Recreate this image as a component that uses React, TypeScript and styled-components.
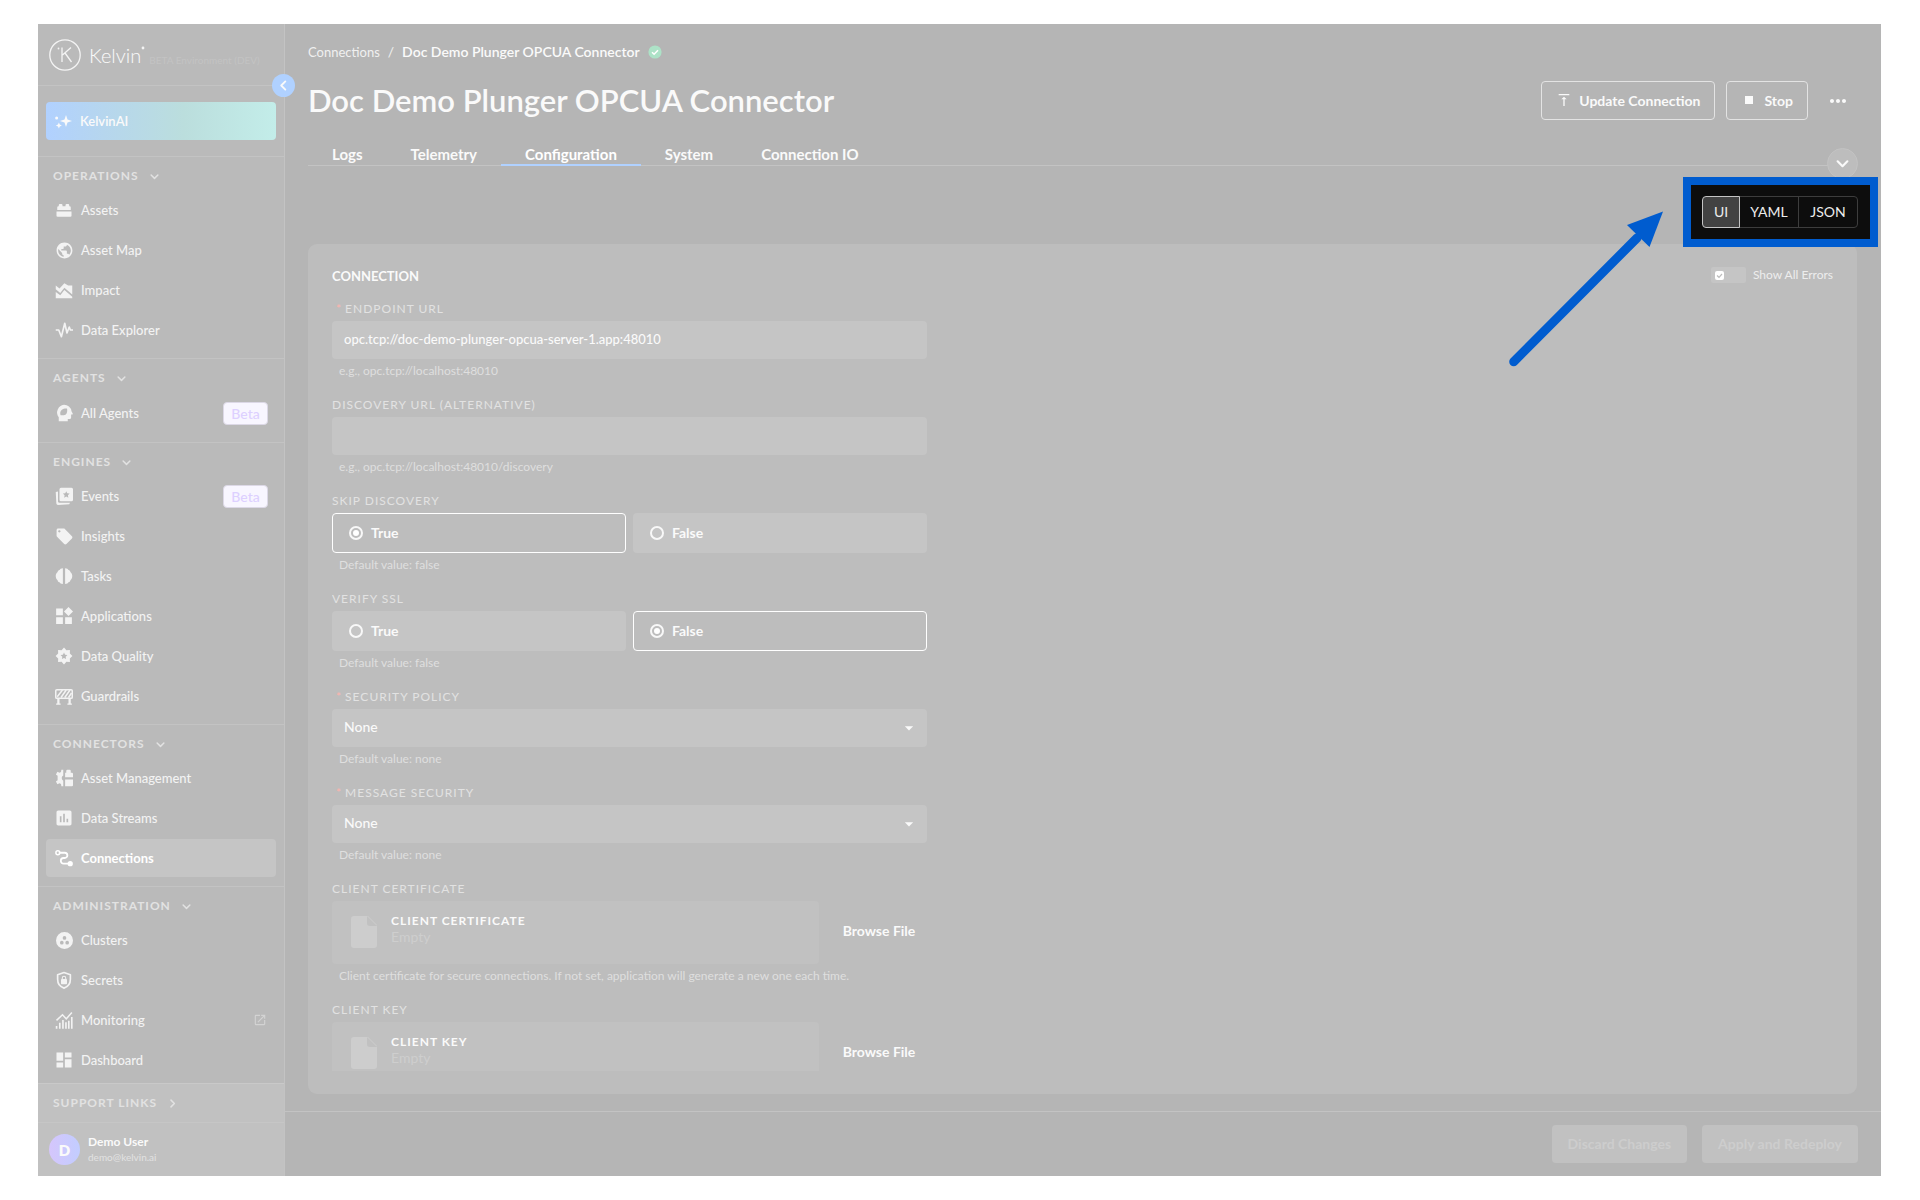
import React, { useState } from "react";
import styled, { createGlobalStyle, css } from "styled-components";
import {
  MdPublic,
  MdLocalOffer,
  MdAssessment,
  MdDashboard,
  MdOpenInNew,
  MdVerticalAlignTop,
  MdStop,
  MdMoreHoriz,
  MdArrowDropDown,
} from "react-icons/md";

const color = {
  page: "#b5b5b5",
  sidebar: "#bababa",
  card: "#bdbdbd",
  line: "#c3c3c3",
  field: "#c5c5c5",
  panel: "#c1c1c1",
  text: "#fafafa",
  nav: "#f3f3f3",
  muted: "#e2e2e2",
  help: "#dfdfdf",
  faint: "#cdcdcd",
  blue: "#b0d1ff",
  mark: "#005ccf",
};

const GlobalStyle = createGlobalStyle`
  *, *::before, *::after { box-sizing: border-box; }
  body {
    margin: 0;
    background: #fff;
    color: ${color.text};
    font-family: Lato, "Open Sans", sans-serif;
    font-size: 14px;
  }
  button, input, select { font: inherit; color: inherit; }
  button { cursor: pointer; }
  a { color: inherit; text-decoration: none; }
`;

/* ---------- frame ---------- */

const Page = styled.div`
  height: 100vh;
  padding: 24px 39px 24px 38px;
`;

const Frame = styled.div`
  display: flex;
  height: 100%;
  background: ${color.page};
`;

/* ---------- sidebar ---------- */

const Sidebar = styled.aside`
  position: relative;
  flex: none;
  display: flex;
  flex-direction: column;
  width: 247px;
  background: ${color.sidebar};
  border-right: 1px solid ${color.line};
`;

const Brand = styled.div`
  flex: none;
  display: flex;
  align-items: center;
  height: 62px;
  padding: 0 11px;
  border-bottom: 1px solid ${color.line};
`;

const BrandName = styled.span`
  display: flex;
  margin: 0 4px 0 8px;
  font-size: 20px;
  line-height: 28px;
  font-weight: 300;
  white-space: nowrap;
`;

const BrandEnv = styled.span`
  padding-top: 10px;
  font-size: 10px;
  line-height: 12px;
  white-space: nowrap;
  color: #c3c3c3;
`;

const CollapseButton = styled.button`
  position: absolute;
  top: 50px;
  right: -11px;
  z-index: 2;
  display: grid;
  place-items: center;
  width: 23px;
  height: 23px;
  padding: 0;
  border: 0;
  border-radius: 50%;
  background: ${color.blue};
`;

const AssistantArea = styled.div`
  flex: none;
  padding: 16px 8px;
`;

const AssistantButton = styled.button`
  display: flex;
  align-items: center;
  gap: 8px;
  width: 100%;
  height: 38px;
  padding: 0 8px 1px;
  border: 0;
  border-radius: 4px;
  background: linear-gradient(90deg, #b1d1ff 0%, #b6d6ee 25%, #bbdedd 60%, #c3ede9 100%);
  font-size: 13px;
  font-weight: 600;
`;

const Nav = styled.nav`
  flex: 1;
  min-height: 0;
  overflow: hidden;
`;

const Section = styled.section`
  padding-bottom: 9px;
  border-top: 1px solid ${color.line};
`;

const SectionToggle = styled.button`
  display: flex;
  align-items: center;
  gap: 11px;
  width: 100%;
  height: 38px;
  padding: 0 15px;
  border: 0;
  background: none;
  color: ${color.muted};
  font-size: 12px;
  line-height: 16px;
  font-weight: 700;
  letter-spacing: 1px;
`;

const NavList = styled.ul`
  display: flex;
  flex-direction: column;
  gap: 2px;
  margin: -4px 0 0;
  padding: 0 8px;
  list-style: none;
`;

const NavLink = styled.a<{ $active?: boolean; $tall?: boolean }>`
  display: flex;
  align-items: center;
  gap: 8px;
  height: ${(p) => (p.$tall ? 40 : 38)}px;
  padding: 0 8px 0 9px;
  border-radius: 4px;
  color: ${color.nav};
  font-size: 13px;
  line-height: 18px;
  font-weight: 500;
  ${(p) =>
    p.$active &&
    css`
      background: ${color.field};
      color: #fff;
      font-weight: 700;
    `}
`;

const IconSlot = styled.span`
  flex: none;
  display: grid;
  place-items: center;
  place-content: center;
  width: 18px;
  height: 18px;
`;

const NavText = styled.span`
  flex: 1;
`;

const Badge = styled.span`
  width: 45px;
  border: 1px solid #dcd8e6;
  border-radius: 4px;
  background: #f8f6ff;
  color: #ddd0ff;
  font-size: 14px;
  line-height: 21px;
  text-align: center;
`;

const External = styled(MdOpenInNew)`
  margin-right: 1px;
  color: #d3d3d3;
`;

const SideFooter = styled.div`
  flex: none;
  background: ${color.panel};
  border-top: 1px solid #c9c9c9;
`;

const User = styled.div`
  display: flex;
  align-items: center;
  gap: 8px;
  height: 54px;
  padding: 0 11px;
  border-top: 1px solid #c6c6c6;
`;

const Avatar = styled.span`
  display: grid;
  place-items: center;
  width: 31px;
  height: 31px;
  border-radius: 50%;
  background: linear-gradient(90deg, #d5c6fc, #c2cdff);
  font-size: 15px;
  font-weight: 800;
`;

const UserName = styled.div`
  font-size: 12px;
  line-height: 16px;
  font-weight: 700;
`;

const UserMail = styled.div`
  font-size: 10px;
  line-height: 15px;
  color: ${color.muted};
`;

/* ---------- main ---------- */

const Main = styled.main`
  flex: 1;
  min-width: 0;
  display: flex;
  flex-direction: column;
`;

const Body = styled.div`
  flex: 1;
  min-height: 0;
  display: flex;
  flex-direction: column;
  padding: 18px 24px 17px 23px;
`;

const Breadcrumb = styled.nav`
  display: flex;
  align-items: center;
  gap: 8px;
  height: 20px;
  font-size: 14px;
  line-height: 20px;
  color: #f0f0f0;

  a { font-size: 13px; }

  strong {
    color: ${color.text};
    font-size: 14px;
    font-weight: 600;
  }
`;

const TitleRow = styled.div`
  display: flex;
  align-items: center;
  justify-content: space-between;
  height: 39px;
  margin-top: 19px;
`;

const Title = styled.h1`
  margin: 0;
  padding-bottom: 2px;
  font-size: 31px;
  line-height: 36px;
  font-weight: 600;
`;

const Actions = styled.div`
  display: flex;
  align-items: center;
  gap: 11px;
`;

const OutlineButton = styled.button`
  display: flex;
  align-items: center;
  gap: 7px;
  height: 39px;
  padding: 0 14px 1px;
  border: 1px solid #e3e3e3;
  border-radius: 4px;
  background: none;
  font-size: 14px;
  font-weight: 700;
`;

const MoreButton = styled.button`
  display: grid;
  place-items: center;
  width: 38px;
  height: 38px;
  padding: 0;
  border: 0;
  background: none;
`;

const TabBar = styled.div`
  position: relative;
  display: flex;
  height: 46px;
  align-items: flex-end;
  border-bottom: 1px solid ${color.line};
`;

const Tab = styled.button<{ $active?: boolean }>`
  height: 23px;
  margin-bottom: -1px;
  padding: 0 24px;
  border: 0;
  border-bottom: 2px solid ${(p) => (p.$active ? color.blue : "transparent")};
  background: none;
  font-size: 15px;
  line-height: 20px;
  font-weight: 700;
  color: ${(p) => (p.$active ? "#fff" : color.text)};
`;

const HeaderToggle = styled.button`
  position: absolute;
  right: -1px;
  bottom: -14px;
  display: grid;
  place-items: center;
  width: 31px;
  height: 31px;
  padding: 0;
  border: 1px solid ${color.line};
  border-radius: 50%;
  background: ${color.card};
`;

const Toolbar = styled.div`
  flex: none;
  display: flex;
  align-items: flex-start;
  justify-content: flex-end;
  height: 78px;
  padding-top: 11px;
`;

const Highlight = styled.div`
  position: relative;
  z-index: 1;
  margin-right: -21px;
  padding: 11px 12px 11px 11px;
  border: 8px solid ${color.mark};
  background: #0d0d0d;
`;

const Arrow = styled.svg`
  position: absolute;
  top: 12px;
  right: calc(100% + 28px);
  pointer-events: none;
`;

const Segments = styled.div`
  display: flex;
`;

const Segment = styled.button<{ $active?: boolean }>`
  position: relative;
  z-index: ${(p) => (p.$active ? 1 : 0)};
  width: ${(p) => (p.$active ? 38 : 60)}px;
  height: 32px;
  padding: 0 0 2px;
  border: 1px solid ${(p) => (p.$active ? "#c4c4c4" : "#3d3d3d")};
  background: ${(p) => (p.$active ? "#424242" : "transparent")};
  color: #ececec;
  font-size: 14px;
  font-weight: 400;

  & + & { margin-left: -1px; }
  &:first-child { border-radius: 4px 0 0 4px; }
  &:last-child { border-radius: 0 4px 4px 0; }
`;

const Card = styled.section`
  position: relative;
  flex: 1;
  min-height: 0;
  padding: 23px 24px;
  border-radius: 9px;
  background: ${color.card};
`;

const CardScroll = styled.div`
  height: 100%;
  overflow: hidden;
`;

const CardHead = styled.div`
  display: flex;
  align-items: flex-start;
  justify-content: space-between;
  height: 18px;
  margin-bottom: 14px;
`;

const CardTitle = styled.h2`
  margin: 0;
  font-size: 13px;
  line-height: 18px;
  font-weight: 700;
`;

const ErrorsToggle = styled.label`
  display: flex;
  align-items: center;
  gap: 7px;
  color: #ededed;
  font-size: 12px;
  line-height: 16px;
`;

const Switch = styled.span`
  display: flex;
  align-items: center;
  width: 35px;
  height: 16px;
  padding: 0 4px;
  border-radius: 2px;
  background: ${color.field};
`;

const SwitchInput = styled.input`
  appearance: none;
  width: 9px;
  height: 9px;
  margin: 0;
  border-radius: 2px;
  background: #fff;
`;

const SwitchBox = styled.span`
  display: grid;

  & > * { grid-area: 1 / 1; }
`;

const Form = styled.form`
  display: flex;
  flex-direction: column;
  gap: 12px;
  width: 595px;
  max-width: 100%;
`;

const Field = styled.div`
  display: flex;
  flex-direction: column;
`;

const labelText = css`
  height: 22px;
  font-size: 12px;
  line-height: 20px;
  letter-spacing: 1px;
  text-transform: uppercase;
  color: ${color.muted};
`;

const Label = styled.label`
  ${labelText}
`;

const GroupLabel = styled.div`
  ${labelText}
`;

const Required = styled.span`
  padding: 0 3px 0 4px;
  color: #ffb4ae;
`;

const Help = styled.div`
  height: 24px;
  padding-left: 7px;
  font-size: 12px;
  line-height: 24px;
  color: ${color.help};
  white-space: nowrap;
`;

const TextInput = styled.input`
  width: 100%;
  height: 38px;
  padding: 0 12px 2px;
  border: 0;
  border-radius: 4px;
  background: ${color.field};
  font-size: 13px;
  font-weight: 500;
`;

const SelectWrap = styled.div`
  display: grid;
  align-items: center;

  & > * { grid-area: 1 / 1; }
  & > svg {
    justify-self: end;
    margin-right: 8px;
    pointer-events: none;
  }
`;

const Select = styled.select`
  appearance: none;
  width: 100%;
  height: 38px;
  padding: 0 12px 3px;
  border: 0;
  border-radius: 4px;
  background: ${color.field};
  font-size: 14px;
  font-weight: 500;
`;

const RadioRow = styled.div`
  display: grid;
  grid-template-columns: 1fr 1fr;
  gap: 7px;
`;

const RadioCard = styled.label<{ $checked: boolean }>`
  display: flex;
  align-items: center;
  gap: 8px;
  height: 40px;
  padding: 0 16px 1px;
  border: 1px solid ${(p) => (p.$checked ? "#fff" : "transparent")};
  border-radius: 4px;
  background: ${(p) => (p.$checked ? color.card : color.field)};
  font-size: 14px;
  line-height: 18px;
  font-weight: 700;
`;

const Radio = styled.input`
  appearance: none;
  display: grid;
  place-items: center;
  width: 14px;
  height: 14px;
  margin: 0;
  border: 2px solid #f8f8f8;
  border-radius: 50%;

  &:checked::after {
    content: "";
    width: 6px;
    height: 6px;
    border-radius: 50%;
    background: #fff;
  }
`;

const FileRow = styled.div`
  display: grid;
  grid-template-columns: 487px 1fr;
  column-gap: 12px;
`;

const FileBox = styled.div`
  display: flex;
  align-items: flex-start;
  gap: 14px;
  height: 63px;
  padding: 11px 19px;
  border-radius: 4px;
  background: ${color.panel};
`;

const FileGlyph = styled.svg`
  margin-top: 4px;
`;

const FileName = styled.div`
  font-size: 12px;
  line-height: 17px;
  font-weight: 700;
  letter-spacing: 1px;
  text-transform: uppercase;
`;

const FileState = styled.div`
  font-size: 14px;
  line-height: 16px;
  color: #cecece;
`;

const BrowseButton = styled.button`
  padding: 0 0 4px;
  border: 0;
  background: none;
  font-size: 14px;
  font-weight: 700;
`;

const Footer = styled.footer`
  flex: none;
  display: flex;
  align-items: center;
  justify-content: flex-end;
  gap: 15px;
  height: 65px;
  padding: 0 23px;
  border-top: 1px solid ${color.line};
`;

const GhostButton = styled.button`
  height: 38px;
  padding: 0 16px 2px;
  border: 0;
  border-radius: 4px;
  background: ${color.panel};
  color: ${color.faint};
  font-size: 14px;
  font-weight: 700;
`;

/* ---------- drawings ---------- */

const Glyph = ({ children, size = 18 }: { children: React.ReactNode; size?: number }) => (
  <svg width={size} height={size} viewBox="0 0 24 24" fill="currentColor" aria-hidden="true">
    {children}
  </svg>
);

const Chevron = ({ dir, size = 9, width = 2 }: { dir: "down" | "left" | "right"; size?: number; width?: number }) => (
  <svg width={size} height={size} viewBox="0 0 12 12" fill="none" stroke="currentColor" strokeWidth={width} strokeLinecap="round" strokeLinejoin="round" aria-hidden="true">
    <path d={dir === "down" ? "M1.5 4 6 8.5 10.500 4" : dir === "left" ? "M8 1.500 3.500 6 8 10.500" : "M4 1.500 8.500 6 4 10.500"} />
  </svg>
);

const Logo = () => (
  <svg width="32" height="32" viewBox="0 0 32 32" fill="none" stroke="#f4f4f4" strokeWidth="1.300" aria-hidden="true">
    <circle cx="16" cy="16" r="15.200" />
    <path d="M13 8.500v14.500M22 8.500 13.500 16M16 14 22.500 23" />
    <circle cx="9.500" cy="9.500" r=".9" fill="#f4f4f4" stroke="none" />
  </svg>
);

const icons: Record<string, React.ReactNode> = {
  sparkles: (
    <Glyph>
      <path d="m16 4 2 6 6 2-6 2-2 6-2-6-6-2 6-2z" />
      <path d="m6.500 14 1.200 2.800 2.800 1.200-2.800 1.200L6.500 22l-1.200-2.800L2.500 18l2.800-1.200z" />
      <circle cx="3.500" cy="8" r="2" />
    </Glyph>
  ),
  assets: (
    <Glyph>
      <path d="M3 12V8.500A1.500 1.500 0 0 1 4.500 7H5V5.500A1.500 1.500 0 0 1 6.500 4h2A1.500 1.500 0 0 1 10 5.500V7h4V5.500A1.500 1.500 0 0 1 15.500 4h2A1.500 1.500 0 0 1 19 5.500V7h.5A1.500 1.500 0 0 1 21 8.500V12z" />
      <path d="M2 14h20v5.500a1.500 1.500 0 0 1-1.500 1.500h-17A1.500 1.500 0 0 1 2 19.500z" />
    </Glyph>
  ),
  map: <MdPublic size={19} />,
  impact: (
    <Glyph>
      <path d="m1 6 5 4 6.500-7 5 3H23v12L12.500 9 7 16l-6-5z" />
      <path d="m1 14.500 6 4.500 5.500-7L23 21v2H1z" />
    </Glyph>
  ),
  explorer: (
    <Glyph>
      <path d="M1 12h4l3.500 9L13 3l3 13 3-8 1.500 4H24" fill="none" stroke="currentColor" strokeWidth="2.200" strokeLinejoin="round" />
    </Glyph>
  ),
  agents: (
    <Glyph>
      <path fillRule="evenodd" d="M12 1a10 10 0 0 1 10 8.500l1.600 3.300a.8.8 0 0 1-.7 1.200H21.500v4a2 2 0 0 1-2 2H17v3H5v-5.500A10.300 10.300 0 0 1 12 1zm4 5c-5-.5-9 2-9 6.500 0 1 .2 1.800.5 2.500h4c4 0 5.500-4.500 4.500-9z" />
    </Glyph>
  ),
  events: (
    <Glyph>
      <path fillRule="evenodd" d="M8 1h14a2 2 0 0 1 2 2v14a2 2 0 0 1-2 2H8a2 2 0 0 1-2-2V3a2 2 0 0 1 2-2zm7 4.500-1.300 2.900-3.200.4 2.300 2.200-.6 3.200 2.800-1.600 2.800 1.600-.6-3.200 2.300-2.200-3.200-.4z" />
      <path d="M1 6.500 4 6v13.500a2 2 0 0 0 2 1.500h14l-1 2-15 1a2.200 2.200 0 0 1-2.200-2z" />
    </Glyph>
  ),
  insights: <MdLocalOffer size={19} />,
  tasks: (
    <Glyph>
      <path d="M10.500 1.500v21C8 22.500 6.500 21 6.500 20.500 4 20 3.500 18 3.500 17.500 1.500 16 1 14 1 12s.5-4 2.500-5.500c0-.5.500-2.500 3-3 0-.5 1.500-2 4-2zM13.500 1.500v21c2.500 0 4-1.500 4-2 2.500-.5 3-2.500 3-3 2-1.500 2.500-3.500 2.500-5.500s-.5-4-2.500-5.500c0-.5-.5-2.500-3-3 0-.5-1.500-2-4-2z" />
    </Glyph>
  ),
  apps: (
    <Glyph>
      <path d="M1.500 2h9v9h-9zM1.500 13.500h9v9h-9zM13.500 13.500h9v9h-9zM18 0l6 6-6 6-6-6z" />
    </Glyph>
  ),
  quality: (
    <Glyph>
      <path fillRule="evenodd" d="m12 .8 3.200 3.400 4.700-.1-.1 4.700L23.200 12l-3.400 3.200.1 4.700-4.700-.1L12 23.200l-3.200-3.400-4.700.1.1-4.700L.8 12l3.400-3.200-.1-4.700 4.700.1zM12 7.300l-1.400 3-3.200.4 2.400 2.200-.6 3.200 2.800-1.600 2.800 1.600-.6-3.200 2.400-2.200-3.200-.4z" />
    </Glyph>
  ),
  guard: (
    <Glyph>
      <path d="M3 15h3v8H3zM18 15h3v8h-3zM1.500 22h6v1.500h-6zM16.500 22h6v1.500h-6z" />
      <rect x="1" y="3.500" width="22" height="11.500" rx="1.500" fill="none" stroke="currentColor" strokeWidth="2" />
      <path d="m3 13 7-9M8 14l7-10M13 14l7-10M18 14l4-6" stroke="currentColor" strokeWidth="2" />
    </Glyph>
  ),
  management: (
    <Glyph>
      <path d="M11 1v7.500a4 4 0 0 0 0 7V23H8.500L8 20l-2-1-2.800 1.200-2-3.500L3.500 15v-6L1.200 7.300l2-3.500L6 5l2-1 .5-3zM13.500 11V5H15V2.500A1.500 1.500 0 0 1 16.500 1h3A1.500 1.500 0 0 1 21 2.500V5h1.500A1.500 1.500 0 0 1 24 6.500V11zM13.500 14H24v7.500a1.500 1.500 0 0 1-1.500 1.500h-9z" />
    </Glyph>
  ),
  streams: <MdAssessment size={20} />,
  connections: (
    <Glyph>
      <path d="M5 5h8a3.500 3.500 0 0 1 0 7h-1.500a3.500 3.500 0 0 0 0 7.500H19" fill="none" stroke="currentColor" strokeWidth="2.400" />
      <circle cx="3.800" cy="5" r="2.600" fill="none" stroke="currentColor" strokeWidth="2" />
      <circle cx="20.300" cy="19.500" r="3.500" />
    </Glyph>
  ),
  clusters: (
    <Glyph size={17}>
      <path fillRule="evenodd" d="M12 0a12 12 0 1 0 0 24 12 12 0 0 0 0-24zm0 5.800a2.600 2.600 0 1 1 0 5.200 2.600 2.600 0 0 1 0-5.200zM8.200 12.500a2.600 2.600 0 1 1 0 5.200 2.600 2.600 0 0 1 0-5.200zm7.600 0a2.600 2.600 0 1 1 0 5.200 2.600 2.600 0 0 1 0-5.200z" />
    </Glyph>
  ),
  secrets: (
    <Glyph>
      <path d="M12 2 3.500 5v6c0 5.500 3 10 8.500 11.800 5.500-1.800 8.500-6.300 8.500-11.800V5z" fill="none" stroke="currentColor" strokeWidth="2.200" strokeLinejoin="round" />
      <rect x="8" y="10.500" width="8" height="7" rx="1" />
      <path d="M9.700 11V9.300a2.300 2.300 0 0 1 4.600 0V11" fill="none" stroke="currentColor" strokeWidth="1.400" />
    </Glyph>
  ),
  monitoring: (
    <Glyph>
      <path d="M2 12.500 10 5l5 5.500 7.500-8.500" fill="none" stroke="currentColor" strokeWidth="2" />
      <path d="M1 20h2.200v3.500H1zM5.300 15.500h2.200v8H5.300zM9.500 12h2.200v11.500H9.500zM13.500 15h2.200v8.500h-2.200zM17.300 13h2.200v10.500h-2.200zM21.300 8h2.200v15.500h-2.200z" />
    </Glyph>
  ),
  dashboard: <MdDashboard size={20} />,
};

/* ---------- data ---------- */

type NavEntry = { icon: string; text: string; beta?: boolean; tall?: boolean; active?: boolean; external?: boolean };

const sections: { title: string; items: NavEntry[] }[] = [
  {
    title: "OPERATIONS",
    items: [
      { icon: "assets", text: "Assets" },
      { icon: "map", text: "Asset Map" },
      { icon: "impact", text: "Impact" },
      { icon: "explorer", text: "Data Explorer" },
    ],
  },
  { title: "AGENTS", items: [{ icon: "agents", text: "All Agents", beta: true, tall: true }] },
  {
    title: "ENGINES",
    items: [
      { icon: "events", text: "Events", beta: true },
      { icon: "insights", text: "Insights" },
      { icon: "tasks", text: "Tasks" },
      { icon: "apps", text: "Applications" },
      { icon: "quality", text: "Data Quality" },
      { icon: "guard", text: "Guardrails" },
    ],
  },
  {
    title: "CONNECTORS",
    items: [
      { icon: "management", text: "Asset Management" },
      { icon: "streams", text: "Data Streams" },
      { icon: "connections", text: "Connections", active: true },
    ],
  },
  {
    title: "ADMINISTRATION",
    items: [
      { icon: "clusters", text: "Clusters" },
      { icon: "secrets", text: "Secrets" },
      { icon: "monitoring", text: "Monitoring", external: true },
      { icon: "dashboard", text: "Dashboard" },
    ],
  },
];

const tabs = ["Logs", "Telemetry", "Configuration", "System", "Connection IO"];

/* ---------- form parts ---------- */

const RadioField = ({ name, title, initial }: { name: string; title: string; initial: string }) => {
  const [value, setValue] = useState(initial);
  return (
    <Field role="radiogroup" aria-labelledby={`${name}-label`}>
      <GroupLabel id={`${name}-label`}>{title}</GroupLabel>
      <RadioRow>
        {["True", "False"].map((option) => (
          <RadioCard key={option} $checked={value === option}>
            <Radio type="radio" name={name} checked={value === option} onChange={() => setValue(option)} />
            {option}
          </RadioCard>
        ))}
      </RadioRow>
      <Help>Default value: false</Help>
    </Field>
  );
};

const SelectField = ({ name, title }: { name: string; title: string }) => (
  <Field>
    <Label htmlFor={name}>
      <Required>*</Required>
      {title}
    </Label>
    <SelectWrap>
      <Select id={name} defaultValue="None">
        <option>None</option>
      </Select>
      <MdArrowDropDown size={20} />
    </SelectWrap>
    <Help>Default value: none</Help>
  </Field>
);

const FileField = ({ title, help }: { title: string; help?: string }) => (
  <Field>
    <GroupLabel>{title}</GroupLabel>
    <FileRow>
      <FileBox>
        <FileGlyph width="26" height="32" viewBox="0 0 26 32" aria-hidden="true">
          <path d="M3 0h13v7a3 3 0 0 0 3 3h7v19a3 3 0 0 1-3 3H3a3 3 0 0 1-3-3V3a3 3 0 0 1 3-3z" fill={color.faint} />
          <path d="M16.500 0 26 9.500" stroke={color.faint} strokeWidth="1" />
        </FileGlyph>
        <div>
          <FileName>{title}</FileName>
          <FileState>Empty</FileState>
        </div>
      </FileBox>
      <BrowseButton type="button">Browse File</BrowseButton>
    </FileRow>
    {help && <Help>{help}</Help>}
  </Field>
);

/* ---------- app ---------- */

export default function App() {
  const [tab, setTab] = useState("Configuration");
  const [mode, setMode] = useState("UI");

  return (
    <Page>
      <GlobalStyle />
      <Frame>
        <Sidebar>
          <Brand>
            <Logo />
            <BrandName>
              Kelvin
              <svg width="4" height="16" viewBox="0 0 4 16" aria-hidden="true">
                <circle cx="2" cy="7" r="1.400" fill="#f4f4f4" />
              </svg>
            </BrandName>
            <BrandEnv>BETA Environment (DEV)</BrandEnv>
          </Brand>
          <CollapseButton aria-label="Collapse sidebar">
            <Chevron dir="left" size={11} />
          </CollapseButton>
          <AssistantArea>
            <AssistantButton>
              {icons.sparkles}
              KelvinAI
            </AssistantButton>
          </AssistantArea>
          <Nav aria-label="Main">
            {sections.map((section) => (
              <Section key={section.title}>
                <SectionToggle>
                  {section.title}
                  <Chevron dir="down" />
                </SectionToggle>
                <NavList>
                  {section.items.map((item) => (
                    <li key={item.text}>
                      <NavLink href="#" $active={item.active} $tall={item.tall}>
                        <IconSlot>{icons[item.icon]}</IconSlot>
                        <NavText>{item.text}</NavText>
                        {item.beta && <Badge>Beta</Badge>}
                        {item.external && <External size={14} />}
                      </NavLink>
                    </li>
                  ))}
                </NavList>
              </Section>
            ))}
          </Nav>
          <SideFooter>
            <SectionToggle>
              SUPPORT LINKS
              <Chevron dir="right" />
            </SectionToggle>
            <User>
              <Avatar>D</Avatar>
              <div>
                <UserName>Demo User</UserName>
                <UserMail>demo@kelvin.ai</UserMail>
              </div>
            </User>
          </SideFooter>
        </Sidebar>

        <Main>
          <Body>
            <Breadcrumb aria-label="Breadcrumb">
              <a href="#">Connections</a>
              <span>/</span>
              <strong>Doc Demo Plunger OPCUA Connector</strong>
              <svg width="14" height="14" viewBox="0 0 14 14" aria-hidden="true">
                <circle cx="7" cy="7" r="6.600" fill="#ade2c7" />
                <path d="m4 7.200 2.100 2.100L10 5.200" fill="none" stroke="#fff" strokeWidth="1.500" />
              </svg>
            </Breadcrumb>

            <TitleRow>
              <Title>Doc Demo Plunger OPCUA Connector</Title>
              <Actions>
                <OutlineButton>
                  <MdVerticalAlignTop size={16} />
                  Update Connection
                </OutlineButton>
                <OutlineButton>
                  <MdStop size={16} />
                  Stop
                </OutlineButton>
                <MoreButton aria-label="More actions">
                  <MdMoreHoriz size={24} />
                </MoreButton>
              </Actions>
            </TitleRow>

            <TabBar role="tablist">
              {tabs.map((t) => (
                <Tab key={t} role="tab" aria-selected={t === tab} $active={t === tab} onClick={() => setTab(t)}>
                  {t}
                </Tab>
              ))}
              <HeaderToggle aria-label="Toggle header">
                <Chevron dir="down" size={13} />
              </HeaderToggle>
            </TabBar>

            <Toolbar>
              <Highlight>
                <Arrow width="158" height="170" viewBox="0 0 158 170" aria-hidden="true">
                  <path d="M8.700 164.700 132 41" stroke={color.mark} strokeWidth="9" strokeLinecap="round" />
                  <path d="m158 14.500-36 13.500 22.500 22z" fill={color.mark} />
                </Arrow>
                <Segments>
                  {["UI", "YAML", "JSON"].map((m) => (
                    <Segment key={m} $active={m === mode} aria-pressed={m === mode} onClick={() => setMode(m)}>
                      {m}
                    </Segment>
                  ))}
                </Segments>
              </Highlight>
            </Toolbar>

            <Card>
              <CardScroll>
                <CardHead>
                  <CardTitle>CONNECTION</CardTitle>
                  <ErrorsToggle>
                    <Switch>
                      <SwitchBox>
                        <SwitchInput type="checkbox" defaultChecked />
                        <svg width="9" height="9" viewBox="0 0 9 9" aria-hidden="true">
                          <path d="M2 4.500 4 6.300 7 3" fill="none" stroke="#bdbdbd" strokeWidth="1.200" />
                        </svg>
                      </SwitchBox>
                    </Switch>
                    Show All Errors
                  </ErrorsToggle>
                </CardHead>
                <Form>
                  <Field>
                    <Label htmlFor="endpoint">
                      <Required>*</Required>
                      Endpoint URL
                    </Label>
                    <TextInput id="endpoint" defaultValue="opc.tcp://doc-demo-plunger-opcua-server-1.app:48010" />
                    <Help>e.g., opc.tcp://localhost:48010</Help>
                  </Field>
                  <Field>
                    <Label htmlFor="discovery">Discovery URL (Alternative)</Label>
                    <TextInput id="discovery" />
                    <Help>e.g., opc.tcp://localhost:48010/discovery</Help>
                  </Field>
                  <RadioField name="skip-discovery" title="Skip Discovery" initial="True" />
                  <RadioField name="verify-ssl" title="Verify SSL" initial="False" />
                  <SelectField name="security-policy" title="Security Policy" />
                  <SelectField name="message-security" title="Message Security" />
                  <FileField
                    title="Client Certificate"
                    help="Client certificate for secure connections. If not set, application will generate a new one each time."
                  />
                  <FileField title="Client Key" />
                </Form>
              </CardScroll>
            </Card>
          </Body>
          <Footer>
            <GhostButton>Discard Changes</GhostButton>
            <GhostButton>Apply and Redeploy</GhostButton>
          </Footer>
        </Main>
      </Frame>
    </Page>
  );
}
